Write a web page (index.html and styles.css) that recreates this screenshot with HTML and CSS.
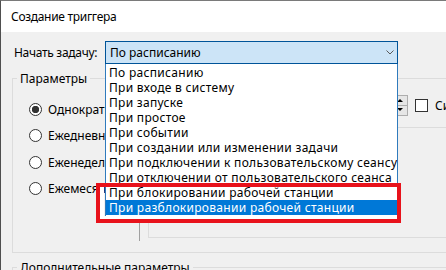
FILE: index.html
```html
<!DOCTYPE html>
<html lang="ru">
<head>
    <meta charset="UTF-8">
    <title>Создание триггера</title>
    <link rel="stylesheet" href="styles.css">
</head>
<body>

    <div class="window">
        <div class="titlebar">Создание триггера</div>

        <div class="content">
            <div class="start-row">
                <span class="start-label">Начать задачу:</span>
                <div class="combo">
                    <span>По расписанию</span>
                    <svg class="chevron" width="8" height="5" viewBox="0 0 8 5">
                        <path d="M0.5 0.5 L4 4 L7.5 0.5" fill="none" stroke="#5a5a5a" stroke-width="1"/>
                    </svg>
                    <ul class="dropdown">
                        <li>По расписанию</li>
                        <li>При входе в систему</li>
                        <li>При запуске</li>
                        <li>При простое</li>
                        <li>При событии</li>
                        <li>При создании или изменении задачи</li>
                        <li>При подключении к пользовательскому сеансу</li>
                        <li>При отключении от пользовательского сеанса</li>
                        <li>При блокировании рабочей станции</li>
                        <li class="selected">При разблокировании рабочей станции</li>
                    </ul>
                </div>
            </div>

            <fieldset class="group params">
                <legend>Параметры</legend>
                <div class="params-body">
                    <div class="radios">
                        <div class="radio-row"><span class="radio checked"></span>Однократно</div>
                        <div class="radio-row"><span class="radio"></span>Ежедневно</div>
                        <div class="radio-row"><span class="radio"></span>Еженедельно</div>
                        <div class="radio-row"><span class="radio"></span>Ежемесячно</div>
                    </div>
                    <div class="separator"></div>
                    <div class="settings">
                        <div class="start-line">
                            <span class="field-label">Начать:</span>
                            <div class="input date">04.10.2023</div>
                            <div class="input time">12:40:31</div>
                            <div class="spinner">
                                <span class="spin up"></span>
                                <span class="spin down"></span>
                            </div>
                            <span class="checkbox"></span>
                            <span class="check-label">Синхронизировать через часовые пояса</span>
                        </div>
                        <div class="inner-box"></div>
                    </div>
                </div>
            </fieldset>

            <fieldset class="group extra">
                <legend>Дополнительные параметры</legend>
            </fieldset>
        </div>

        <div class="mark"></div>
    </div>

</body>
</html>
```

FILE: styles.css
```css
* {
    box-sizing: border-box;
}
html, body {
    margin: 0;
}
body {
    width: 446px;
    height: 270px;
    overflow: hidden;
    font-family: "Noto Sans", "Open Sans", sans-serif;
    font-size: 12px;
    color: #000;
    background-color: #f0f0f0;
}
.window {
    position: relative;
    height: 270px;
    border-top: 1px solid #7a7a7a;
    border-left: 1px solid #4f4f4f;
    overflow: hidden;
}
.titlebar {
    height: 31px;
    line-height: 31px;
    padding-left: 10px;
    letter-spacing: -0.3px;
    background-color: #fff;
}
.content {
    padding-top: 9px;
}
.start-row {
    display: flex;
    align-items: center;
    height: 23px;
    margin-left: 13px;
}
.start-label {
    width: 91px;
    letter-spacing: -0.3px;
    white-space: nowrap;
}
.combo {
    position: relative;
    width: 293px;
    height: 23px;
    line-height: 21px;
    padding-left: 4px;
    background-color: #cce4f7;
    border: 1px solid #005499;
}
.chevron {
    position: absolute;
    right: 3px;
    top: 8px;
}
.dropdown {
    position: absolute;
    z-index: 10;
    top: 22px;
    left: -1px;
    width: 293px;
    margin: 0;
    padding: 1px 0 2px;
    list-style: none;
    background-color: #fff;
    border: 1px solid #2f7bbd;
    border-top: none;
}
.dropdown li {
    height: 15px;
    line-height: 15px;
    padding-left: 3px;
    letter-spacing: 0.3px;
    white-space: nowrap;
}
.dropdown li.selected {
    background-color: #0078d7;
    color: #fff;
}
.group {
    width: 600px;
    margin: 7px 0 0 11px;
    padding: 0;
    border: 1px solid #dcdcdc;
}
.group legend {
    margin-left: 4px;
    padding: 0 3px;
    line-height: 15px;
}
.params-body {
    display: flex;
    height: 166px;
    padding-left: 16px;
}
.radios {
    width: 110px;
    padding-top: 10px;
}
.radio-row {
    display: flex;
    align-items: center;
    height: 26.5px;
    white-space: nowrap;
}
.radio {
    flex: none;
    width: 13px;
    height: 13px;
    margin-right: 6px;
    border: 1px solid #333;
    border-radius: 50%;
    background-color: #fff;
}
.radio.checked {
    background: radial-gradient(circle, #333 3.4px, #fff 4px);
}
.separator {
    width: 1px;
    height: 146px;
    margin-top: 9px;
    background-color: #a0a0a0;
}
.settings {
    margin-left: 8px;
}
.start-line {
    display: flex;
    align-items: center;
    height: 21px;
    margin-top: 9px;
    white-space: nowrap;
}
.field-label {
    width: 52px;
}
.input {
    height: 21px;
    line-height: 19px;
    padding-left: 3px;
    background-color: #fff;
    border: 1px solid #7a7a7a;
}
.input.date {
    width: 100px;
    margin-right: 8px;
}
.input.time {
    width: 84px;
}
.spinner {
    display: flex;
    flex-direction: column;
    width: 16px;
    height: 21px;
}
.spin {
    position: relative;
    flex: 1;
    background-color: #e6e6e6;
    border: 1px solid #adadad;
}
.spin.down {
    border-top: none;
}
.spin::after {
    content: "";
    position: absolute;
    left: 4px;
    top: 3px;
    border-left: 3px solid transparent;
    border-right: 3px solid transparent;
}
.spin.up::after {
    border-bottom: 3px solid #000;
}
.spin.down::after {
    top: 2px;
    border-top: 3px solid #000;
}
.checkbox {
    width: 13px;
    height: 13px;
    margin: 0 7px;
    border: 1px solid #333;
    background-color: #fff;
}
.inner-box {
    width: 600px;
    height: 111px;
    margin-top: 11px;
    border: 1px solid #dcdcdc;
}
.mark {
    position: absolute;
    z-index: 20;
    left: 95px;
    top: 182px;
    width: 305px;
    height: 40px;
    border: 4px solid #e8121b;
    box-shadow: inset 4px -3px 0 #fff;
}
```
